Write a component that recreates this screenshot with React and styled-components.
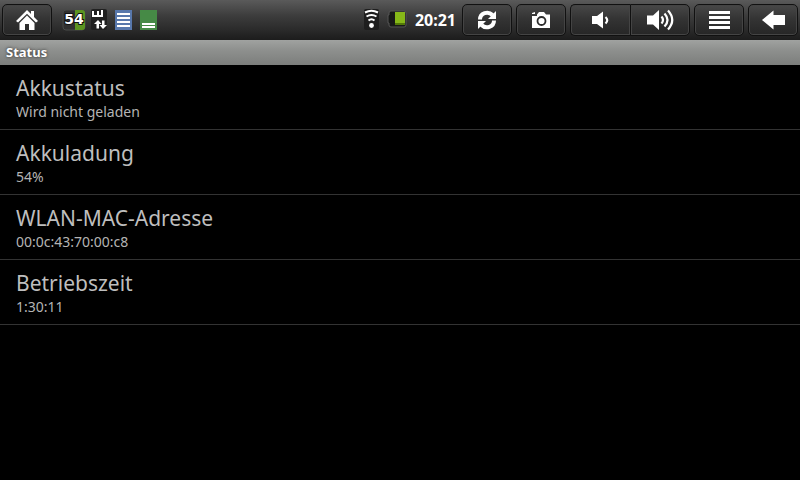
import styled, { createGlobalStyle } from 'styled-components';

const GlobalStyle = createGlobalStyle`
  * {
    box-sizing: border-box;
  }

  body {
    margin: 0;
    background-color: #000;
    font-family: "Noto Sans", "Open Sans", sans-serif;
  }
`;

const StatusBar = styled.header`
  height: 40px;
  padding: 0 2px;
  display: flex;
  align-items: center;
  gap: 4px;
  background: linear-gradient(#5a5a5a, #3c3c3c 40%, #2a2a2a 75%, #1c1c1c);
`;

const Notifications = styled.div`
  flex: 1;
  padding-left: 6px;
  display: flex;
  align-items: center;
  gap: 1px;
`;

const SystemIcons = styled.div`
  padding-right: 2px;
  display: flex;
  align-items: center;
`;

const Clock = styled.time`
  padding-left: 6px;
  color: #fff;
  font-size: 16px;
  font-weight: 700;
  line-height: 24px;
`;

const BarButton = styled.button`
  width: ${({ $wide }) => ($wide ? '60px' : '50px')};
  height: 32px;
  padding: 0;
  display: flex;
  justify-content: center;
  align-items: center;
  border: 1px solid #111;
  border-radius: 5px;
  background: linear-gradient(#484848, #343434 45%, #262626);
  box-shadow: inset 0 0 0 1px #444;
  color: #fff;
`;

const ButtonGroup = styled.div`
  display: flex;

  ${BarButton}:first-child {
    border-right: 0;
    border-radius: 5px 0 0 5px;
  }

  ${BarButton}:last-child {
    border-radius: 0 5px 5px 0;
  }
`;

const TitleBar = styled.h1`
  height: 25px;
  margin: 0;
  padding: 0 6px;
  background: linear-gradient(#a0a2a0, #8e908e 40%, #7c7e7c);
  color: #fff;
  font-size: 13px;
  font-weight: 700;
  line-height: 24px;
  text-shadow: 0 0 3px #222;
`;

const List = styled.dl`
  margin: 0;
`;

const Row = styled.div`
  height: 65px;
  padding: 9px 16px 0;
  border-bottom: 1px solid #333;
`;

const RowTitle = styled.dt`
  color: #bebebe;
  font-size: 21px;
  line-height: 28px;
`;

const RowValue = styled.dd`
  margin: 0;
  color: #b4b4b4;
  font-size: 14px;
  line-height: 20px;
`;

const HomeIcon = () => (
  <svg width="24" height="22" viewBox="0 0 24 22" fill="currentColor">
    <path d="M12 1 1 12l2 1.6 9-8.8 9 8.8 2-1.6-4-4V2h-3v3z" />
    <path d="M12 6.5 4.5 14v7H10v-6h4v6h5.5v-7z" />
  </svg>
);

const RefreshIcon = () => (
  <svg width="20" height="20" viewBox="0 0 20 20" fill="none" stroke="currentColor" strokeWidth="4">
    <path d="M3 9.5C3 3 11 .5 15.5 5" />
    <path d="M17 10.5C17 17 9 19.5 4.5 15" />
    <path d="M19 1v8h-8z" fill="currentColor" stroke="none" />
    <path d="M1 19v-8h8z" fill="currentColor" stroke="none" />
  </svg>
);

const CameraIcon = () => (
  <svg width="20" height="18" viewBox="0 0 20 18">
    <path d="M1 2l3-1v2H1zM6 3.5 8 1h5l2 2.500h4V17H1V5h5z" fill="currentColor" />
    <circle cx="10.5" cy="10" r="4" fill="#fff" stroke="#2c2c2c" strokeWidth="1.8" />
  </svg>
);

const VolumeDownIcon = () => (
  <svg width="20" height="18" viewBox="0 0 20 18">
    <path d="M1 5h5l6-4.500v17L6 13H1z" fill="currentColor" />
    <path d="M14.5 6q3.500 3 0 6.500" fill="none" stroke="currentColor" strokeWidth="2.2" />
  </svg>
);

const VolumeUpIcon = () => (
  <svg width="28" height="22" viewBox="0 0 28 22">
    <path d="M1 6.500h6l6-5.500v20l-6-5.500H1z" fill="currentColor" />
    <g fill="none" stroke="currentColor" strokeWidth="2.2">
      <path d="M15.5 7.5q3 3.500 0 7" />
      <path d="M18.5 4.5q6 6.500 0 13" />
      <path d="M22 1.5q8.500 9.500 0 19" />
    </g>
  </svg>
);

const MenuIcon = () => (
  <svg width="22" height="20" viewBox="0 0 22 20" fill="currentColor">
    <path d="M1 1h21v3H1zM1 6h21v3H1zM1 11h21v3H1zM1 16h21v3H1z" />
  </svg>
);

const BackIcon = () => (
  <svg width="24" height="20" viewBox="0 0 24 20" fill="currentColor">
    <path d="M1 10 12.5.5V5H24v10H12.5v4.500z" />
  </svg>
);

const BatteryLevelIcon = () => (
  <svg width="26" height="24" viewBox="0 0 26 24">
    <rect x="1" y="2" width="22" height="20" rx="3" fill="#303030" stroke="#484a48" />
    <path d="M13 2h7q3 0 3 3v14q0 3-3 3h-7z" fill="#5c9420" />
    <text
      x="12"
      y="16"
      textAnchor="middle"
      fontFamily="DejaVu Sans"
      fontSize="14"
      fontWeight="700"
      fill="#fff"
      stroke="#111"
      strokeWidth="2"
      paintOrder="stroke"
    >
      54
    </text>
  </svg>
);

const MobileDataIcon = () => (
  <svg width="24" height="24" viewBox="0 0 24 24">
    <rect x="2" y="1" width="16" height="21" rx="2" fill="#202020" />
    <path d="M3 3h2v4h3V3h2v4h2V2h2v7H3z" fill="#fff" />
    <path d="M9 12l3.500 4H10v4.500H7.500V16H5z" fill="#fff" />
    <path d="M14 21l-3.500-4H13v-4.500h2.500V17H18z" fill="#fff" />
  </svg>
);

const NotesIcon = () => (
  <svg width="24" height="24" viewBox="0 0 24 24">
    <rect x="1" y="2" width="17" height="20" fill="#5878ac" />
    <path d="M3 5h13v2H3zM3 9h13v2H3zM3 13h13v2H3zM3 17h13v2H3z" fill="#fff" />
  </svg>
);

const MemoryIcon = () => (
  <svg width="24" height="24" viewBox="0 0 24 24">
    <rect x="1" y="2" width="17" height="20" fill="#468a46" />
    <path d="M3 15h13v2H3zM3 18h13v2H3z" fill="#fff" />
  </svg>
);

const WifiIcon = () => (
  <svg width="24" height="24" viewBox="0 0 24 24">
    <rect x="3" y="1" width="15" height="21" rx="2" fill="#1e1e1e" />
    <g fill="none" stroke="#fff" strokeWidth="2">
      <path d="M4 4.500q6.500-3.500 13 0" />
      <path d="M5.500 8.500q5-3 10 0" />
      <path d="M7.500 12.500q3-2.500 6 0" />
    </g>
    <circle cx="10.5" cy="17.5" r="2.4" fill="#fff" />
  </svg>
);

const BatteryIcon = () => (
  <svg width="24" height="24" viewBox="0 0 24 24">
    <path d="M6 3h13q2 0 2 2v12q0 2-2 2H6q-2 0-2-2v-2H3V7h1V5q0-2 2-2z" fill="#181a18" stroke="#555" />
    <rect x="10" y="4" width="10" height="12" fill="#86b818" />
    <path d="M10 16h10" stroke="#527808" strokeWidth="2" />
  </svg>
);

const entries = [
  { title: 'Akkustatus', value: 'Wird nicht geladen' },
  { title: 'Akkuladung', value: '54%' },
  { title: 'WLAN-MAC-Adresse', value: '00:0c:43:70:00:c8' },
  { title: 'Betriebszeit', value: '1:30:11' },
];

const App = () => (
  <>
    <GlobalStyle />
    <StatusBar>
      <BarButton type="button" aria-label="Home"><HomeIcon /></BarButton>
      <Notifications>
        <BatteryLevelIcon />
        <MobileDataIcon />
        <NotesIcon />
        <MemoryIcon />
      </Notifications>
      <SystemIcons>
        <WifiIcon />
        <BatteryIcon />
        <Clock>20:21</Clock>
      </SystemIcons>
      <BarButton type="button" aria-label="Aktualisieren"><RefreshIcon /></BarButton>
      <BarButton type="button" aria-label="Kamera"><CameraIcon /></BarButton>
      <ButtonGroup>
        <BarButton type="button" $wide aria-label="Leiser"><VolumeDownIcon /></BarButton>
        <BarButton type="button" $wide aria-label="Lauter"><VolumeUpIcon /></BarButton>
      </ButtonGroup>
      <BarButton type="button" aria-label="Menü"><MenuIcon /></BarButton>
      <BarButton type="button" aria-label="Zurück"><BackIcon /></BarButton>
    </StatusBar>
    <main>
      <TitleBar>Status</TitleBar>
      <List>
        {entries.map(({ title, value }) => (
          <Row key={title}>
            <RowTitle>{title}</RowTitle>
            <RowValue>{value}</RowValue>
          </Row>
        ))}
      </List>
    </main>
  </>
);

export default App;
